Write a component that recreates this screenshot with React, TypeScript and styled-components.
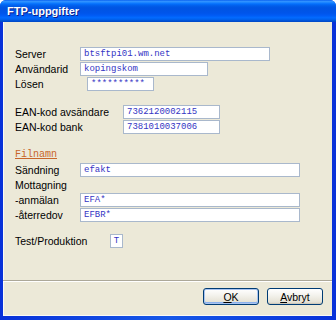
import React from "react"
import styled, { createGlobalStyle } from "styled-components"

const GlobalStyle = createGlobalStyle`
  html, body {
    margin: 0;
    padding: 0;
    background: #ffffff;
  }
  #root {
    width: 336px;
    height: 320px;
  }
`

const Window = styled.div`
  width: 336px;
  height: 320px;
  display: flex;
  flex-direction: column;
  border-radius: 6px 6px 0 0;
  overflow: hidden;
  background: #0b45d8;
`

const TitleBar = styled.div`
  height: 22px;
  flex: none;
  display: flex;
  align-items: center;
  padding-left: 7px;
  background: linear-gradient(
    to bottom,
    #0058ee 0%,
    #3593ff 5%,
    #288eff 9%,
    #127dff 14%,
    #036ffc 18%,
    #0262ee 24%,
    #0057e5 32%,
    #0054e3 40%,
    #0055eb 60%,
    #005bf5 70%,
    #026afe 80%,
    #0062ef 88%,
    #0052d6 94%,
    #0046c4 100%
  );
`

const Title = styled.span`
  font-family: "Liberation Sans", Arial, sans-serif;
  font-weight: bold;
  font-size: 11px;
  color: #ffffff;
  text-shadow: 1px 1px 0 #0a1e8c;
`

const Frame = styled.div`
  flex: 1;
  display: flex;
  padding: 0 4px 4px 3px;
  background: linear-gradient(to right, #0831d9, #1658e8 50%, #0831d9);
`

const Body = styled.div`
  flex: 1;
  display: flex;
  flex-direction: column;
  background: #ece9d8;
  box-shadow: inset 1px 0 0 #fbfaf6, inset 0 -1px 0 #fbfaf6;
  font-family: "Liberation Sans", Arial, sans-serif;
  font-size: 10.5px;
  color: #000000;
`

const Form = styled.div`
  flex: 1;
  padding: 24px 0 0 12px;
`

const Row = styled.div<{ $top?: number }>`
  display: flex;
  align-items: center;
  height: 15px;
  margin-top: ${p => p.$top ?? 0}px;
`

const Label = styled.label<{ $width: number }>`
  width: ${p => p.$width}px;
  flex: none;
  white-space: nowrap;
`

const Field = styled.input<{ $width: number; $center?: boolean }>`
  box-sizing: border-box;
  width: ${p => p.$width}px;
  height: 14px;
  margin: 0;
  padding: 0 0 0 3px;
  border: 1px solid #a9b8cc;
  background: #ffffff;
  font-family: "Liberation Mono", "Courier New", monospace;
  font-size: 9px;
  color: #3434c4;
  outline: 0;
  text-align: ${p => (p.$center ? "center" : "left")};
  ${p => (p.$center ? "padding: 0;" : "")}
`

const Heading = styled.span`
  font-family: "Liberation Mono", "Courier New", monospace;
  font-size: 10px;
  color: #c8662a;
  text-decoration: underline;
`

const Footer = styled.div`
  flex: none;
  border-top: 1px solid #aca899;
  box-shadow: inset 0 1px 0 #ffffff;
  display: flex;
  justify-content: flex-end;
  gap: 8px;
  padding: 7px 9px 11px 0;
`

const Button = styled.button<{ $default?: boolean }>`
  width: 56px;
  height: 17px;
  padding: 0;
  border: 1px solid #003c74;
  border-radius: 3px;
  background: linear-gradient(to bottom, #ffffff 0%, #f4f3ee 40%, #e6e3d6 85%, #d6d0c5 100%);
  box-shadow: ${p =>
    p.$default
      ? "inset 0 0 0 1px #a9c4f0, inset 0 -1px 0 1px #8ab0ec"
      : "inset 0 -1px 0 #d0cbbd"};
  font-family: "Liberation Sans", Arial, sans-serif;
  font-size: 10.5px;
  color: #000000;
  cursor: pointer;

  u {
    text-decoration: underline;
  }
`

const App: React.FC = () => {
  return (
    <>
      <GlobalStyle />
      <Window>
        <TitleBar>
          <Title>FTP-uppgifter</Title>
        </TitleBar>
        <Frame>
          <Body>
            <Form>
              <Row>
                <Label $width={65}>Server</Label>
                <Field $width={190} readOnly value="btsftpi01.wm.net" />
              </Row>
              <Row>
                <Label $width={65}>Användarid</Label>
                <Field $width={128} readOnly value="kopingskom" />
              </Row>
              <Row>
                <Label $width={72}>Lösen</Label>
                <Field $width={67} readOnly value="**********" />
              </Row>

              <Row $top={13}>
                <Label $width={108}>EAN-kod avsändare</Label>
                <Field $width={97} readOnly value="7362120002115" />
              </Row>
              <Row>
                <Label $width={108}>EAN-kod bank</Label>
                <Field $width={97} readOnly value="7381010037006" />
              </Row>

              <Row $top={13}>
                <Heading>Filnamn</Heading>
              </Row>
              <Row>
                <Label $width={65}>Sändning</Label>
                <Field $width={220} readOnly value="efakt" />
              </Row>
              <Row>
                <Label $width={65}>Mottagning</Label>
              </Row>
              <Row>
                <Label $width={65}>-anmälan</Label>
                <Field $width={220} readOnly value="EFA*" />
              </Row>
              <Row>
                <Label $width={65}>-återredov</Label>
                <Field $width={220} readOnly value="EFBR*" />
              </Row>

              <Row $top={11}>
                <Label $width={95}>Test/Produktion</Label>
                <Field $width={13} $center readOnly value="T" />
              </Row>
            </Form>
            <Footer>
              <Button $default>
                <u>O</u>K
              </Button>
              <Button>
                <u>A</u>vbryt
              </Button>
            </Footer>
          </Body>
        </Frame>
      </Window>
    </>
  )
}

export default App
